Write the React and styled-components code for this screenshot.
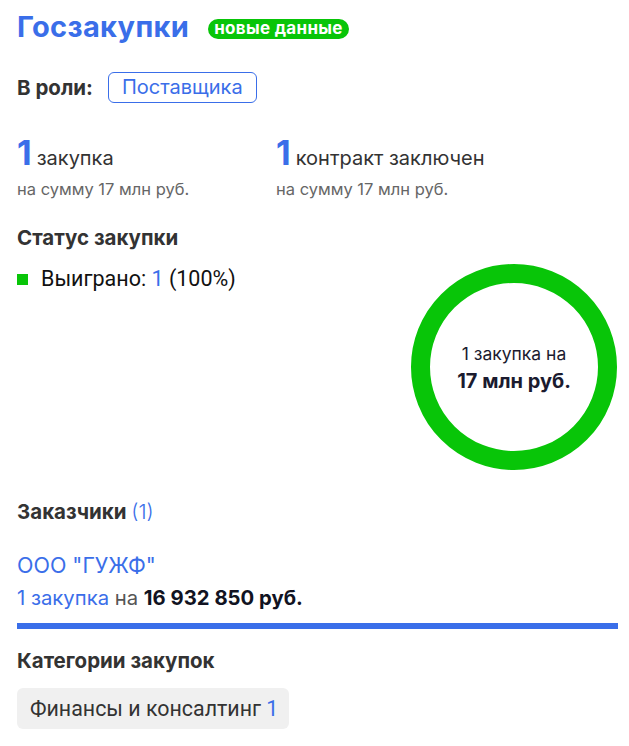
import React from "react";
import styled, { createGlobalStyle } from "styled-components";

const GlobalStyle = createGlobalStyle`
  body {
    margin: 0;
    background: #fff;
    font-family: Inter, "Noto Sans", sans-serif;
    color: #222;
  }
`;

function App() {
  return (
    <>
      <GlobalStyle />
      <Page>
        <Header>
          <Title>Госзакупки</Title>
          <Badge>новые данные</Badge>
        </Header>

        <RoleRow>
          <Label>В роли:</Label>
          <RoleChip>Поставщика</RoleChip>
        </RoleRow>

        <Stats>
          <Stat>
            <StatTop>
              <BigNumber>1</BigNumber>
              <StatText>закупка</StatText>
            </StatTop>
            <StatSub>на сумму 17 млн руб.</StatSub>
          </Stat>
          <Stat>
            <StatTop>
              <BigNumber>1</BigNumber>
              <StatText>контракт заключен</StatText>
            </StatTop>
            <StatSub>на сумму 17 млн руб.</StatSub>
          </Stat>
        </Stats>

        <SectionTitle $top={26}>Статус закупки</SectionTitle>
        <StatusRow>
          <Legend>
            <LegendMark />
            <span>
              Выиграно: <Accent>1</Accent> (100%)
            </span>
          </Legend>
          <Donut>
            <svg width="206" height="206" viewBox="0 0 206 206">
              <circle cx="103" cy="103" r="93.5" fill="none" stroke="#08c508" strokeWidth="19" />
            </svg>
            <DonutText>
              <span>1 закупка на</span>
              <strong>17 млн руб.</strong>
            </DonutText>
          </Donut>
        </StatusRow>

        <SectionTitle $top={29}>
          Заказчики <Count>(1)</Count>
        </SectionTitle>
        <Customer>
          <CustomerName>ООО "ГУЖФ"</CustomerName>
          <CustomerInfo>
            <Accent>1 закупка</Accent> на <Amount>16 932 850 руб.</Amount>
          </CustomerInfo>
          <Bar />
        </Customer>

        <SectionTitle $top={19}>Категории закупок</SectionTitle>
        <CategoryChip>
          Финансы и консалтинг <Accent>1</Accent>
        </CategoryChip>
      </Page>
    </>
  );
}

const Page = styled.div`
  width: 601px;
  padding: 9px 11px 16px 17px;
`;

const Header = styled.div`
  display: flex;
  align-items: center;
  gap: 19px;
  height: 36px;
`;

const Title = styled.h1`
  margin: 0;
  font-size: 29px;
  line-height: 36px;
  font-weight: 700;
  letter-spacing: 0.35px;
  color: #3a6ee9;
`;

const Badge = styled.span`
  display: inline-block;
  height: 20px;
  line-height: 19px;
  padding: 0 6px;
  border-radius: 10px;
  background: #08c508;
  color: #fff;
  font-size: 17px;
  font-weight: 700;
  letter-spacing: 0.3px;
  margin-top: 3px;
`;

const RoleRow = styled.div`
  display: flex;
  align-items: center;
  gap: 15px;
  margin-top: 27px;
`;

const Label = styled.span`
  font-size: 20.5px;
  font-weight: 700;
  color: #333;
`;

const RoleChip = styled.span`
  display: inline-block;
  height: 31px;
  line-height: 29px;
  box-sizing: border-box;
  padding: 0 13px;
  border: 1px solid #3a6ee9;
  border-radius: 6px;
  color: #3a6ee9;
  font-size: 20px;
`;

const Stats = styled.div`
  display: flex;
  margin-top: 30px;
`;

const Stat = styled.div`
  width: 259px;
`;

const StatTop = styled.div`
  display: flex;
  align-items: baseline;
  gap: 5px;
  height: 40px;
`;

const BigNumber = styled.span`
  font-size: 34px;
  line-height: 40px;
  font-weight: 700;
  color: #3a6ee9;
`;

const StatText = styled.span`
  font-size: 20px;
  line-height: 40px;
  color: #333;
`;

const StatSub = styled.div`
  margin-top: 6px;
  font-size: 16.5px;
  line-height: 20px;
  color: #666;
`;

const SectionTitle = styled.div`
  margin-top: ${(p) => p.$top}px;
  font-size: 20.5px;
  line-height: 26px;
  font-weight: 700;
  color: #333;
`;

const Count = styled.span`
  font-weight: 300;
  color: #3a6ee9;
`;

const StatusRow = styled.div`
  display: flex;
  justify-content: space-between;
  align-items: flex-start;
  margin-top: 13px;
`;

const Legend = styled.div`
  display: flex;
  align-items: center;
  margin-top: 2px;
  font-family: Roboto, "Liberation Sans", sans-serif;
  font-size: 21.5px;
  line-height: 26px;
  color: #111;
`;

const LegendMark = styled.span`
  flex: none;
  width: 11px;
  height: 11px;
  background: #08c508;
  margin-right: 13px;
`;

const Accent = styled.span`
  color: #3a6ee9;
`;

const Donut = styled.div`
  position: relative;
  width: 206px;
  height: 206px;
  margin-right: 1px;
  svg {
    display: block;
  }
`;

const DonutText = styled.div`
  position: absolute;
  inset: 0;
  display: flex;
  flex-direction: column;
  align-items: center;
  justify-content: center;
  gap: 1px;
  color: #1b1b2f;
  span {
    font-size: 17.5px;
    line-height: 26px;
  }
  strong {
    font-size: 20px;
    line-height: 26px;
    font-weight: 700;
  }
`;

const Customer = styled.div`
  margin-top: 27px;
`;

const CustomerName = styled.div`
  font-size: 21.5px;
  line-height: 26px;
  color: #3a6ee9;
`;

const CustomerInfo = styled.div`
  margin-top: 8px;
  font-size: 20.3px;
  line-height: 24px;
  color: #555;
`;

const Amount = styled.span`
  font-weight: 700;
  color: #111322;
`;

const Bar = styled.div`
  height: 6px;
  background: #3a6ee9;
  margin-top: 13px;
`;

const CategoryChip = styled.div`
  display: inline-block;
  height: 41px;
  line-height: 41px;
  padding: 0 11px 0 13px;
  margin-top: 14px;
  border-radius: 6px;
  background: #f0f0f0;
  font-family: Roboto, "Liberation Sans", sans-serif;
  font-size: 21.4px;
  color: #333;
`;

export default App;
